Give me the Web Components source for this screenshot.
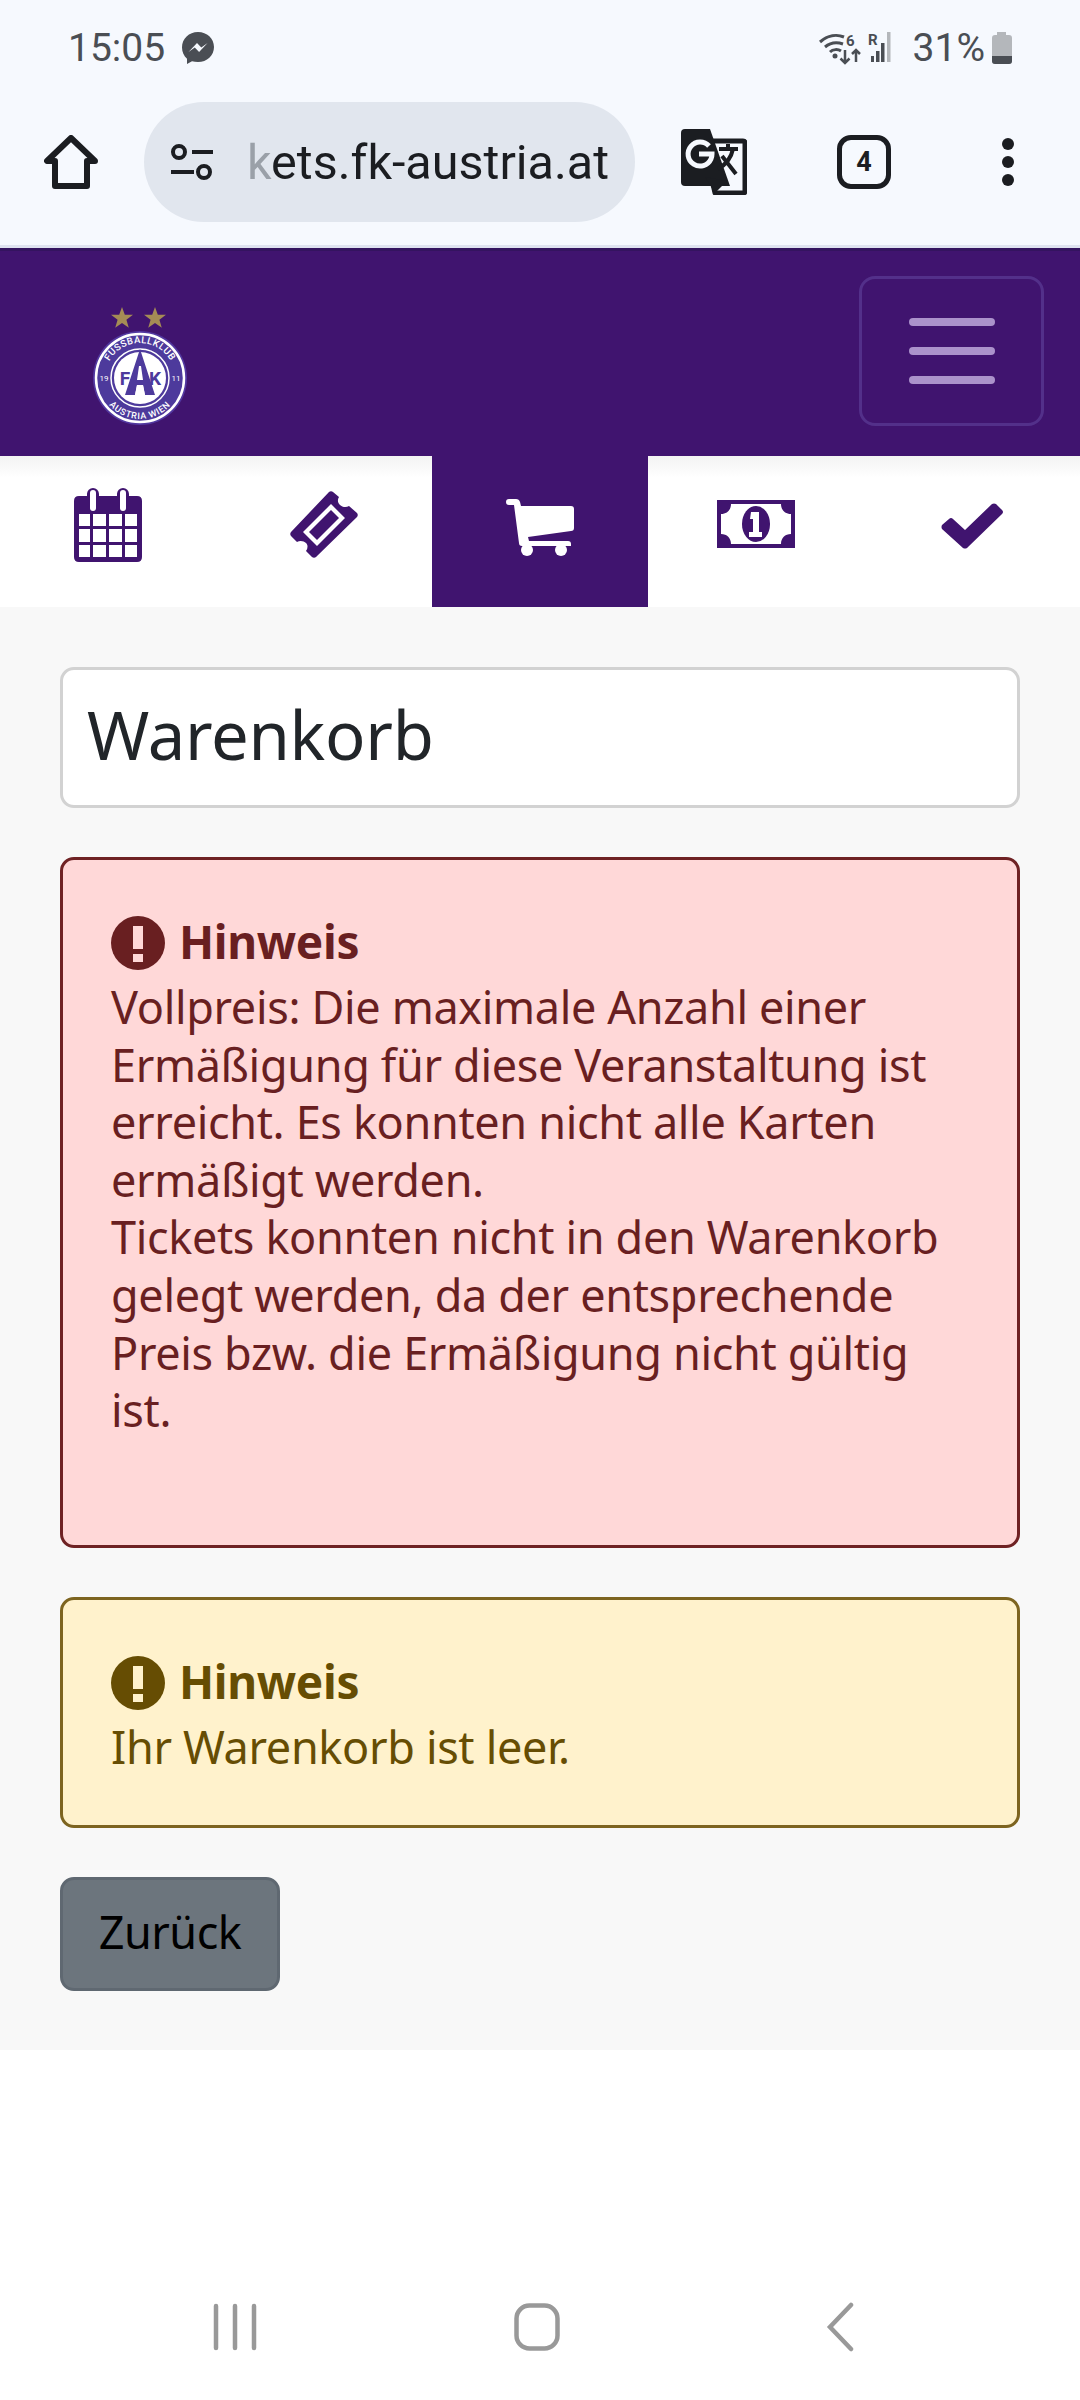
<!DOCTYPE html>
<html lang="de">
<head>
<meta charset="utf-8">
<title>Warenkorb</title>
<style>
  html, body { margin: 0; padding: 0; background: #fff; }
  body { width: 1080px; height: 2400px; display: flex; flex-direction: column; font-family: "Noto Sans", sans-serif; }
  main-area { flex: none; }
  android-nav { margin-top: auto; }
</style>
</head>
<body>
<status-bar></status-bar>
<browser-toolbar url="kets.fk-austria.at" tabs="4"></browser-toolbar>
<site-header></site-header>
<step-nav></step-nav>
<main-area>
  <page-title>Warenkorb</page-title>
  <alert-box kind="danger" style="margin-bottom:49px;height:691px">
    Vollpreis: Die maximale Anzahl einer Ermäßigung für diese Veranstaltung ist erreicht. Es konnten nicht alle Karten ermäßigt werden.<br>Tickets konnten nicht in den Warenkorb gelegt werden, da der entsprechende Preis bzw. die Ermäßigung nicht gültig ist.
  </alert-box>
  <alert-box kind="warning" style="margin-bottom:49px;height:231px">Ihr Warenkorb ist leer.</alert-box>
  <back-button>Zurück</back-button>
</main-area>
<android-nav></android-nav>

<script>
class StatusBar extends HTMLElement {
  constructor() {
    super();
    this.attachShadow({ mode: 'open' }).innerHTML = `
    <style>
      :host { display: flex; align-items: center; height: 64px; padding: 16px 67px 0 68px; background: #f6f9fe; color: #4a4e54; font: 39px Roboto, sans-serif; }
      .left, .right { display: flex; align-items: center; }
      .right { margin-left: auto; }
      svg { display: block; }
    </style>
    <div class="left">
      <span>15:05</span>
      <svg style="margin-left:16px" width="34" height="34" viewBox="0 0 34 34"><path fill="#4a4e54" d="M17 1C8 1 1 7.700 1 16.500c0 4.600 1.900 8.600 5 11.300V33l5-2.700c1.800.5 3.800.8 6 .8 9 0 16-6.700 16-15.100S26 1 17 1z"/><path fill="#f6f9fe" d="M7.500 21l8.500-9 4.300 4.400 6.300-4.400-8.500 9-4.300-4.400z"/></svg>
    </div>
    <div class="right">
      <svg width="82" height="34" viewBox="0 0 82 34" style="margin-right:12px">
        <g fill="none" stroke="#4a4e54" stroke-width="3">
          <path d="M1 11c8-7 17-8 24-5"/><path d="M6 16c6-5 12-5 18-3"/><path d="M11 21c3-3 8-3 11-1"/>
        </g>
        <circle cx="16" cy="25" r="2.500" fill="#4a4e54"/>
        <text x="27" y="15" fill="#4a4e54" font-family="Roboto, sans-serif" font-weight="700" font-size="15">6</text>
        <text x="49" y="14" fill="#4a4e54" font-family="Roboto, sans-serif" font-weight="700" font-size="15">R</text>
        <path fill="none" stroke="#4a4e54" stroke-width="2.500" d="M26 19v13M21.500 27.500L26 32l4.500-4.500M37 31V19M33 23l4-4 4 4"/>
        <path fill="#4a4e54" d="M52 31h3v-6h-3zM57 31h3.500V20H57zM62 31h3.500V12H62z"/>
        <path fill="#b4b7bb" d="M68 31h3.500V1H68z"/>
      </svg>
      <span>31%</span>
      <svg style="margin-left:6px" width="22" height="32" viewBox="0 0 22 32"><path fill="#b4b7bb" d="M6 0h9v3h3q3 0 3 3v23q0 3-3 3H4q-3 0-3-3V6q0-3 3-3h2z"/><path fill="#4a4e54" d="M1 24h20v5q0 3-3 3H4q-3 0-3-3z"/></svg>
    </div>`;
  }
}

class BrowserToolbar extends HTMLElement {
  constructor() {
    super();
    this.attachShadow({ mode: 'open' }).innerHTML = `
    <style>
      :host { display: flex; align-items: center; height: 168px; padding: 0 0 1px 44px; box-sizing: border-box; background: #f6f9fe; border-bottom: 3px solid #dfe3f0; color: #1b1d21; }
      svg { display: block; flex: none; }
      .pill { display: flex; align-items: center; box-sizing: border-box; width: 491px; height: 120px; margin-left: 46px; padding-left: 26px; border-radius: 60px; background: #e1e6ee; overflow: hidden; }
      .url { margin-left: 33px; font: 48.500px Roboto, sans-serif; white-space: nowrap; color: #1b1d21; }
      .url::first-letter { color: #9aa0a8; }
      .tabs { position: relative; margin-left: 90px; width: 54px; height: 54px; box-sizing: border-box; border: 5px solid #1b1d21; border-radius: 14px; display: flex; align-items: center; justify-content: center; font: 700 27px Roboto, sans-serif; }
    </style>
    <svg width="54" height="54" viewBox="0 0 54 54"><path fill="none" stroke="#1b1d21" stroke-width="6" stroke-linejoin="round" d="M27 3L3 26h8v25h32V26h8z"/></svg>
    <div class="pill">
      <svg width="44" height="38" viewBox="0 0 44 38"><g fill="none" stroke="#1b1d21" stroke-width="4"><circle cx="9" cy="9" r="6"/><circle cx="34" cy="29" r="6"/><path d="M22 9h21M1 29h23"/></g></svg>
      <span class="url"></span>
    </div>
    <svg style="margin-left:46px" width="66" height="66" viewBox="0 0 66 66">
      <path fill="#f6f9fe" stroke="#1b1d21" stroke-width="5" stroke-linejoin="round" d="M22 12h40q2 0 2 2v48q0 2-2 2H34z"/>
      <path fill="#1b1d21" d="M4 0h25l20 57H4q-4 0-4-4V4q0-4 4-4z"/>
      <path fill="#1b1d21" d="M24 48l10 16 12-12z"/>
      <path fill="none" stroke="#f6f9fe" stroke-width="5" d="M28 17a12 12 0 1 0 2 13c1-2 1-4 1-5H18"/>
      <path fill="none" stroke="#1b1d21" stroke-width="4" d="M38 20h19M47 15v5M52 20c-2 10-8 16-15 20M41 27l14 18"/>
    </svg>
    <div class="tabs"></div>
    <svg style="margin-left:111px" width="12" height="48" viewBox="0 0 12 48"><g fill="#1b1d21"><circle cx="6" cy="6" r="6"/><circle cx="6" cy="24" r="6"/><circle cx="6" cy="42" r="6"/></g></svg>`;
  }
  connectedCallback() {
    this.shadowRoot.querySelector('.url').textContent = this.getAttribute('url');
    this.shadowRoot.querySelector('.tabs').textContent = this.getAttribute('tabs');
  }
}

class SiteHeader extends HTMLElement {
  constructor() {
    super();
    this.attachShadow({ mode: 'open' }).innerHTML = `
    <style>
      :host { display: flex; align-items: flex-start; box-sizing: border-box; height: 208px; padding: 0 36px 0 92px; background: #40146f; border-top: 3px solid #34145f; }
      .logo { display: block; margin-top: 52px; }
      button { margin: 25px 0 0 auto; width: 185px; height: 150px; padding: 0; background: none; border: 3px solid #53308a; border-radius: 16px; display: flex; flex-direction: column; align-items: center; justify-content: center; gap: 21px; }
      button i { display: block; width: 86px; height: 8px; border-radius: 4px; background: #ab92cb; }
    </style>
    <svg class="logo" width="96" height="126" viewBox="0 0 96 126">
      <defs>
        <path id="top" d="M13 75a35 35 0 0 1 70 0"/>
        <path id="bot" d="M7 75a41 41 0 0 0 82 0"/>
      </defs>
      <g fill="#a58c55">
        <path d="M30 4l2.800 7.800H41l-6.600 5 2.400 8L30 20l-6.800 4.800 2.400-8-6.600-5h8.200z"/>
        <path d="M63 4l2.800 7.800H74l-6.600 5 2.400 8L63 20l-6.800 4.800 2.400-8-6.600-5h8.200z"/>
      </g>
      <circle cx="48" cy="75" r="47" fill="#5238a0"/>
      <circle cx="48" cy="75" r="44" fill="#4d3a9c" stroke="#fff" stroke-width="2.500"/>
      <text fill="#fff" font-family="Roboto, sans-serif" font-weight="500" font-size="9.500" letter-spacing=".5"><textPath href="#top" startOffset="50%" text-anchor="middle">FUSSBALLKLUB</textPath></text>
      <text fill="#fff" font-family="Roboto, sans-serif" font-weight="500" font-size="9" letter-spacing=".7"><textPath href="#bot" startOffset="50%" text-anchor="middle">AUSTRIA WIEN</textPath></text>
      <circle cx="48" cy="75" r="26" fill="#fff"/>
      <circle cx="48" cy="75" r="29" fill="none" stroke="#fff" stroke-width="1.500"/>
      <text x="12" y="78" fill="#fff" font-family="Roboto, sans-serif" font-size="8" text-anchor="middle">19</text>
      <text x="84" y="78" fill="#fff" font-family="Roboto, sans-serif" font-size="8" text-anchor="middle">11</text>
      <path fill="#4d3a9c" d="M48 46l-15 46h10l2-10h6l2 10h10z"/>
      <path fill="#fff" d="M47 63h2l2 14h-6zM45 82h6l2 10h-10z"/>
      <text x="33" y="82" fill="#4d3a9c" font-family="Roboto, sans-serif" font-weight="700" font-size="19" text-anchor="middle">F</text>
      <text x="63" y="82" fill="#4d3a9c" font-family="Roboto, sans-serif" font-weight="700" font-size="19" text-anchor="middle">K</text>
    </svg>
    <button aria-label="Menü"><i></i><i></i><i></i></button>`;
  }
}

class StepNav extends HTMLElement {
  constructor() {
    super();
    this.attachShadow({ mode: 'open' }).innerHTML = `
    <style>
      :host { display: grid; grid-template-columns: repeat(5, 216px); height: 151px; background: linear-gradient(#f3f3f3, #fff 22px); color: #40146f; }
      div { display: flex; justify-content: center; align-items: flex-start; padding-top: 32px; }
      .on { background: #40146f; color: #fff; }
      svg { display: block; fill: currentColor; }
    </style>
    <div><svg width="68" height="74" viewBox="0 0 68 74">
      <path fill-rule="evenodd" d="M13 8V6a6 6 0 0 1 12 0v2h18V6a6 6 0 0 1 12 0v2h8q5 0 5 5v56q0 5-5 5H5q-5 0-5-5V13q0-5 5-5zM5 26v12h11V26zm14 0v12h13V26zm16 0v12h13V26zm16 0v12h12V26zM5 41v13h11V41zm14 0v13h13V41zm16 0v13h13V41zm16 0v13h12V41zM5 57v12h11V57zm14 0v12h13V57zm16 0v12h13V57zm16 0v12h12V57z"/>
      <path fill="#fff" d="M16 5a3 3 0 0 1 6 0v15a3 3 0 0 1-6 0zM46 5a3 3 0 0 1 6 0v15a3 3 0 0 1-6 0z"/>
    </svg></div>
    <div><svg style="margin-top:3px" width="68" height="68" viewBox="0 0 68 68">
      <path fill-rule="evenodd" d="M43 1l6 5c-2 3-1 6 1 8s6 3 9 1l8 7c1 1 1 3 0 4L26 66c-1 1-3 1-4 0l-6-6c2-3 2-6 0-8s-6-3-9-1l-6-6c-1-1-1-3 0-4L39 1c1-1 3-1 4 0zM41 13L13 41l14 14 28-28z"/>
      <path d="M41 19l8 8-22 22-8-8z"/>
    </svg></div>
    <div class="on"><svg style="margin-top:11px" width="68" height="57" viewBox="0 0 68 57">
      <path d="M0 3q0-3 3-3h7q3 0 4 3l1 4h50q3 0 3 3v19q0 3-3 3L22 38l1 4h39q3 0 3 3v2H16q-3 0-3-3L8 6H3Q0 6 0 3z"/>
      <circle cx="21" cy="51" r="6"/><circle cx="55" cy="51" r="6"/>
    </svg></div>
    <div><svg style="margin-top:12px" width="78" height="48" viewBox="0 0 78 48">
      <path fill-rule="evenodd" d="M0 0h78v48H0zM14 4c0 6-4 10-10 10v20c6 0 10 4 10 10h50c0-6 4-10 10-10V14c-6 0-10-4-10-10z"/>
      <ellipse cx="39" cy="24" rx="14" ry="18"/>
      <path fill="#fff" d="M34 12h8v20h3v5H32v-5h4V19h-3z"/>
    </svg></div>
    <div><svg style="margin-top:15px" width="62" height="46" viewBox="0 0 62 46">
      <path d="M51 1q2-1 4 0l6 6q2 2 0 4L26 45q-2 1-4 0L1 26q-1-2 0-4l7-6q2-2 4 0l12 11z"/>
    </svg></div>`;
  }
}

class MainArea extends HTMLElement {
  constructor() {
    super();
    this.attachShadow({ mode: 'open' }).innerHTML = `
    <style>
      :host { display: block; height: 1443px; box-sizing: border-box; padding: 60px 60px 0; background: #f8f8f8; }
    </style>
    <slot></slot>`;
  }
}

class PageTitle extends HTMLElement {
  constructor() {
    super();
    this.attachShadow({ mode: 'open' }).innerHTML = `
    <style>
      :host { display: flex; align-items: center; box-sizing: border-box; height: 141px; margin-bottom: 49px; padding: 0 0 7px 24px; background: #fff; border: 3px solid #d2d2d2; border-radius: 14px; font-size: 67px; letter-spacing: -.3px; color: #212529; }
    </style>
    <slot></slot>`;
  }
}

class AlertBox extends HTMLElement {
  constructor() {
    super();
    this.attachShadow({ mode: 'open' }).innerHTML = `
    <style>
      :host { display: block; box-sizing: border-box; padding: 56px 49px 0 48px; border: 3px solid var(--line); border-radius: 14px; background: var(--bg); color: var(--ink); font-size: 45px; letter-spacing: -.34px; line-height: 57.600px; }
      :host([kind="danger"]) { --bg: #ffd8d8; --ink: #691f21; --line: #6f2224; }
      :host([kind="warning"]) { --bg: #fff2cc; --ink: #664d03; --line: #7d6420; }
      .head { display: flex; align-items: center; gap: 14px; height: 54px; margin-bottom: 8px; font-weight: 700; }
      .head span { margin-bottom: 3px; font-size: 46px; }
      svg { display: block; flex: none; }
    </style>
    <div class="head">
      <svg width="54" height="54" viewBox="0 0 54 54"><circle cx="27" cy="27" r="27" fill="currentColor"/><rect x="22" y="10" width="10" height="23" fill="var(--bg)"/><rect x="22" y="38" width="10" height="8" fill="var(--bg)"/></svg>
      <span>Hinweis</span>
    </div>
    <slot></slot>`;
  }
}

class BackButton extends HTMLElement {
  constructor() {
    super();
    this.attachShadow({ mode: 'open' }).innerHTML = `
    <style>
      :host { display: flex; align-items: center; justify-content: center; box-sizing: border-box; width: 220px; height: 114px; padding-bottom: 6px; background: #6c757d; border: 3px solid #5f6871; border-radius: 14px; color: #000; font-size: 45px; letter-spacing: -.5px; }
    </style>
    <slot></slot>`;
  }
}

class AndroidNav extends HTMLElement {
  constructor() {
    super();
    this.attachShadow({ mode: 'open' }).innerHTML = `
    <style>
      :host { display: flex; justify-content: space-between; align-items: center; box-sizing: border-box; height: 100px; padding: 0 226px 46px 212px; background: #fff; }
      svg { display: block; fill: none; stroke: #999; stroke-width: 4.500; stroke-linecap: round; stroke-linejoin: round; }
    </style>
    <svg width="46" height="48" viewBox="0 0 46 48"><path d="M4 3v42M23 3v42M42 3v42"/></svg>
    <svg style="margin-left:-11px" width="46" height="48" viewBox="0 0 46 48"><rect x="2.500" y="2.500" width="41" height="43" rx="13"/></svg>
    <svg width="28" height="50" viewBox="0 0 28 50"><path d="M25 3L4 25l21 22" stroke-linejoin="miter"/></svg>`;
  }
}

customElements.define('status-bar', StatusBar);
customElements.define('browser-toolbar', BrowserToolbar);
customElements.define('site-header', SiteHeader);
customElements.define('step-nav', StepNav);
customElements.define('main-area', MainArea);
customElements.define('page-title', PageTitle);
customElements.define('alert-box', AlertBox);
customElements.define('back-button', BackButton);
customElements.define('android-nav', AndroidNav);
</script>
</body>
</html>
